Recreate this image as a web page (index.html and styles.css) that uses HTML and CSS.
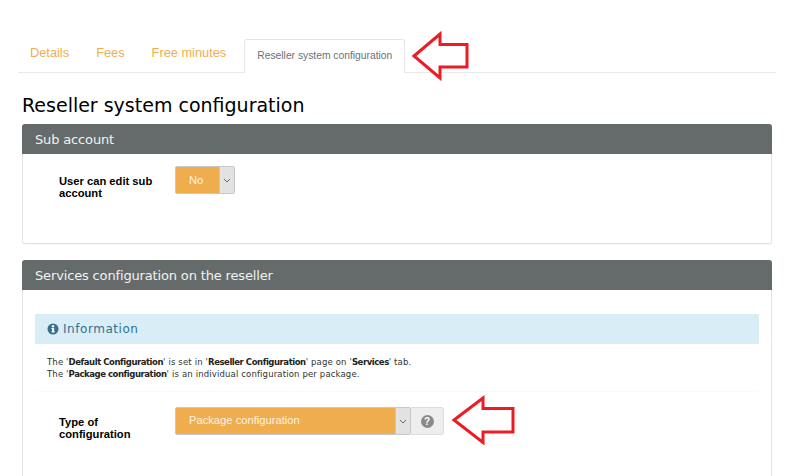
FILE: index.html
```html
<!DOCTYPE html>
<html lang="en">
<head>
<meta charset="utf-8">
<title>Reseller system configuration</title>
<link rel="stylesheet" href="styles.css">
</head>
<body>
<nav class="tabs">
  <a class="tab">Details</a>
  <a class="tab">Fees</a>
  <a class="tab">Free minutes</a>
  <a class="tab tab-active">Reseller system configuration</a>
</nav>
<main class="content">
  <h1 class="title">Reseller system configuration</h1>
  <section class="panel panel-sub">
    <h2 class="panel-head">Sub account</h2>
    <div class="row row-sub">
      <label class="label">User can edit sub account</label>
      <div class="select select-short">
        <span class="select-value">No</span>
        <span class="select-arrow"><svg width="8" height="5" viewBox="0 0 8 5"><path d="M1 1l3 3 3-3" fill="none" stroke="#666" stroke-width="1"/></svg></span>
      </div>
    </div>
  </section>
  <section class="panel panel-services">
    <h2 class="panel-head">Services configuration on the reseller</h2>
    <div class="info">
      <div class="info-head">
        <svg class="info-icon" width="12" height="12" viewBox="0 0 12 12"><circle cx="6" cy="6" r="5.5" fill="#31708f"/><rect x="5" y="5" width="2.2" height="4.2" fill="#fff"/><rect x="4.4" y="5" width="1.4" height="1" fill="#fff"/><rect x="4.4" y="8.4" width="3.4" height="1" fill="#fff"/><circle cx="6" cy="3.3" r="1.2" fill="#fff"/></svg>
        <span>Information</span>
      </div>
      <div class="info-body">
        The '<b>Default Configuration</b>' is set in '<b>Reseller Configuration</b>' page on '<b>Services</b>' tab.<br>
        The '<b>Package configuration</b>' is an individual configuration per package.
      </div>
    </div>
    <div class="row row-type">
      <label class="label">Type of configuration</label>
      <div class="select select-long">
        <span class="select-value">Package configuration</span>
        <span class="select-arrow"><svg width="8" height="5" viewBox="0 0 8 5"><path d="M1 1l3 3 3-3" fill="none" stroke="#666" stroke-width="1"/></svg></span>
      </div>
      <div class="help"><span class="help-icon">?</span></div>
    </div>
  </section>
</main>
<svg class="arrow arrow-tab" width="60" height="50" viewBox="410 31 60 50"><path d="M414 56L440 34V44.500H467V67H440V78Z" fill="#fff" stroke="#ed1c24" stroke-width="3"/></svg>
<svg class="arrow arrow-help" width="66" height="50" viewBox="450 395 66 50"><path d="M454 420L483 398V408.500H513V432H483V442.500Z" fill="#fff" stroke="#ed1c24" stroke-width="3"/></svg>
</body>
</html>
```
FILE: styles.css
```css
html, body {
  margin: 0;
  padding: 0;
  background: #fff;
}
body {
  position: relative;
  width: 800px;
  height: 476px;
  overflow: hidden;
  font-family: "Liberation Sans", Arial, sans-serif;
}
.tabs {
  display: flex;
  align-items: flex-end;
  margin: 0 24px 0 18px;
  padding-top: 39px;
  height: 33px;
  box-sizing: content-box;
  border-bottom: 1px solid #e9e9e9;
}
.tab {
  padding: 0 12px;
  margin-right: 3px;
  height: 33px;
  line-height: 27px;
  font-size: 12.800px;
  color: #f0ad4e;
}
.tab-active {
  box-sizing: border-box;
  height: 34px;
  margin: 0 0 -1px 3px;
  padding: 0 12px;
  line-height: 32px;
  font-size: 10.300px;
  color: #6b7078;
  background: #fff;
  border: 1px solid #e6e6e6;
  border-bottom: 0;
  border-radius: 3px 3px 0 0;
}
.content {
  margin: 0 28px 0 22px;
}
.title {
  margin: 0;
  height: 51px;
  padding-top: 20px;
  box-sizing: border-box;
  line-height: 24px;
  font-family: "DejaVu Sans", Verdana, sans-serif;
  font-size: 19px;
  font-weight: 400;
  color: #000;
}
.panel {
  background: #fff;
  border: 1px solid #e4e4e4;
  border-top: 0;
  border-radius: 3px;
  box-sizing: border-box;
}
.panel-sub {
  height: 120px;
  margin-bottom: 16px;
  box-shadow: 0 1px 1px rgba(0, 0, 0, 0.04);
}
.panel-services {
  height: 216px;
  border-bottom: 0;
  border-radius: 3px 3px 0 0;
}
.panel-head {
  margin: 0 -1px;
  height: 30px;
  padding-left: 13px;
  line-height: 31px;
  font-family: "DejaVu Sans", Verdana, sans-serif;
  font-size: 13px;
  font-weight: 400;
  letter-spacing: -0.150px;
  color: #f2f2f2;
  background: #656b6a;
  border-radius: 3px 3px 0 0;
}
.row {
  display: flex;
  align-items: flex-start;
}
.row-sub {
  padding: 12px 0 0 36px;
}
.row-type {
  padding: 16px 0 0 36px;
}
.label {
  width: 94px;
  margin-right: 22px;
  font-size: 11.200px;
  font-weight: 700;
  line-height: 12px;
  color: #000;
  padding-top: 9px;
}
.select {
  display: flex;
  box-sizing: border-box;
  height: 28px;
  border: 1px solid #c8c8c8;
  background: #f0ad4e;
  border-radius: 2px;
}
.select-short {
  width: 60px;
}
.select-long {
  width: 236px;
}
.select-value {
  flex: 1;
  padding-left: 13px;
  font-size: 11.200px;
  line-height: 25px;
  color: #fdf3e2;
}
.select-short .select-value {
  line-height: 27px;
}
.select-arrow {
  display: flex;
  align-items: center;
  justify-content: center;
  width: 14px;
  background: #e2e2e2;
  border-left: 1px solid #c8c8c8;
}
.help {
  display: flex;
  align-items: center;
  justify-content: center;
  box-sizing: border-box;
  width: 33px;
  height: 28px;
  background: #eee;
  border: 1px solid #ddd;
  border-left: 0;
  border-radius: 0 3px 3px 0;
}
.help-icon {
  width: 13px;
  height: 13px;
  border-radius: 50%;
  background: #8a8a8a;
  color: #fff;
  font-size: 10px;
  font-weight: 700;
  line-height: 13px;
  text-align: center;
}
.info {
  margin: 24px 12px 0;
  height: 77px;
  border-radius: 3px;
  box-shadow: 0 1px 1px rgba(0, 0, 0, 0.025);
}
.info-head {
  display: flex;
  align-items: center;
  gap: 4px;
  height: 30px;
  padding-left: 12px;
  background: #d9edf7;
  font-family: "DejaVu Sans", Verdana, sans-serif;
  font-size: 12px;
  letter-spacing: 0.550px;
  color: #31708f;
}
.info-body {
  padding: 13px 12px 0;
  font-family: "DejaVu Sans", Verdana, sans-serif;
  font-size: 8.500px;
  letter-spacing: 0.150px;
  line-height: 11.500px;
  color: #333;
}
.info-body b {
  color: #222;
  letter-spacing: -0.450px;
}
.arrow {
  position: absolute;
  display: block;
}
.arrow-tab {
  left: 410px;
  top: 31px;
}
.arrow-help {
  left: 450px;
  top: 395px;
}
```
